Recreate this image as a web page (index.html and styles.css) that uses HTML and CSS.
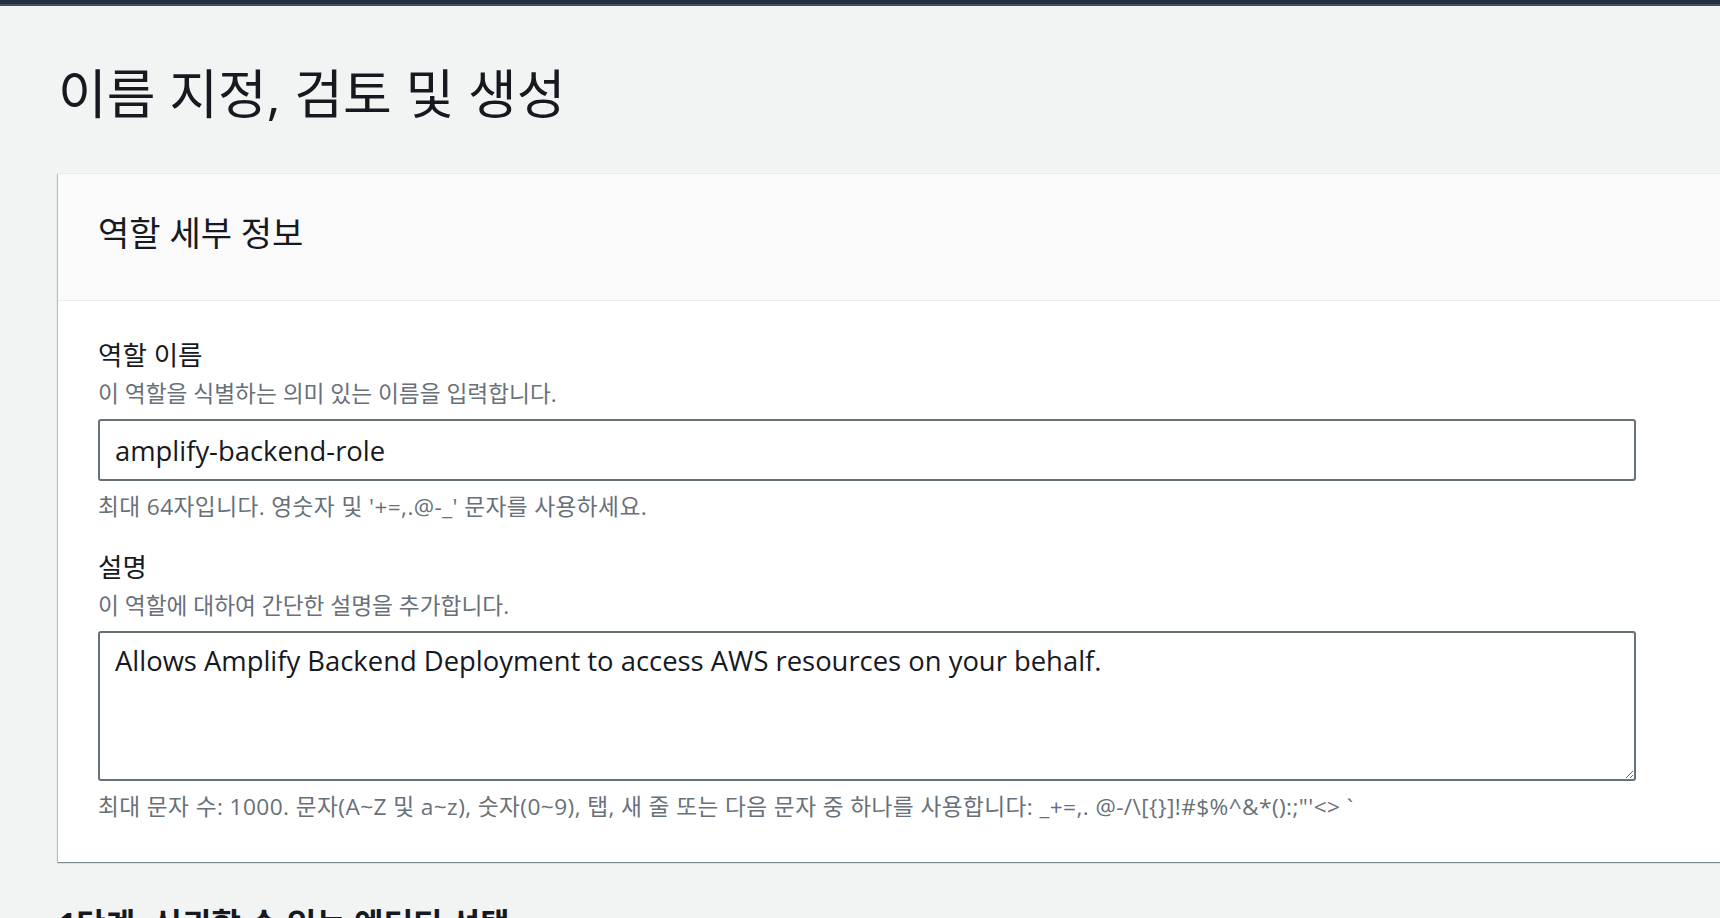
FILE: index.html
```html
<!DOCTYPE html>
<html lang="ko">
<head>
<meta charset="utf-8">
<title>이름 지정, 검토 및 생성</title>
<link rel="stylesheet" href="styles.css">
</head>
<body>
<div class="topbar"></div>
<main class="page">
  <h1 class="page-title">이름 지정, 검토 및 생성</h1>
  <section class="card">
    <header class="card-header">
      <h2 class="card-title">역할 세부 정보</h2>
    </header>
    <div class="card-body">
      <div class="field">
        <label class="field-label" for="role-name">역할 이름</label>
        <p class="field-desc">이 역할을 식별하는 의미 있는 이름을 입력합니다.</p>
        <input class="text-input" id="role-name" type="text" value="amplify-backend-role">
        <p class="field-constraint">최대 64자입니다. 영숫자 및 '+=,.@-_' 문자를 사용하세요.</p>
      </div>
      <div class="field">
        <label class="field-label" for="role-desc">설명</label>
        <p class="field-desc">이 역할에 대하여 간단한 설명을 추가합니다.</p>
        <textarea class="text-area" id="role-desc">Allows Amplify Backend Deployment to access AWS resources on your behalf.</textarea>
        <p class="field-constraint">최대 문자 수: 1000. 문자(A~Z 및 a~z), 숫자(0~9), 탭, 새 줄 또는 다음 문자 중 하나를 사용합니다: _+=,. @-/\[{}]!#$%^&amp;*():;"'&lt;&gt; `</p>
      </div>
    </div>
  </section>
  <h2 class="section-title">1단계: 신뢰할 수 있는 엔터티 선택</h2>
</main>
</body>
</html>
```
FILE: styles.css
```css
* {
  box-sizing: border-box;
}

html,
body {
  margin: 0;
  height: 100%;
}

body {
  background: #f2f3f3;
  color: #16191f;
  font-family: "Open Sans", "Noto Sans CJK KR", sans-serif;
  overflow: hidden;
}

.topbar {
  height: 6px;
  background: #232f3e;
  border-bottom: 2px solid #454f5c;
}

.page {
  padding-left: 58px;
}

.page-title {
  margin: 58px 0 0;
  font-size: 53px;
  line-height: 60px;
  font-weight: 400;
}

.card {
  margin-top: 49px;
  width: 1700px;
  background: #ffffff;
  border-top: 1px solid #eaeded;
  box-shadow: 0 1px 1px 0 rgba(0, 28, 36, 0.35),
    -1px 1px 1px 0 rgba(0, 28, 36, 0.2);
}

.card-header {
  background: #fafafa;
  padding: 39px 40px 47px;
  border-bottom: 1px solid #eaeded;
}

.card-title {
  margin: 0;
  font-size: 34px;
  line-height: 40px;
  font-weight: 400;
}

.card-body {
  padding: 38px 40px 41px;
}

.field {
  width: 1538px;
  display: flex;
  flex-direction: column;
}

.field + .field {
  margin-top: 30px;
}

.field-label {
  font-size: 26.5px;
  line-height: 32px;
  color: #16191f;
}

.field-desc,
.field-constraint {
  margin: 0;
  font-size: 22.7px;
  line-height: 28px;
  color: #687078;
}

.field-desc {
  margin-top: 9px;
}

.field-constraint {
  margin-top: 12px;
  letter-spacing: 0.4px;
}

.text-input,
.text-area {
  margin-top: 11px;
  width: 100%;
  border: 2px solid #687078;
  border-radius: 3px;
  background: #ffffff;
  color: #16191f;
  font-family: "Open Sans", "Noto Sans CJK KR", sans-serif;
  font-size: 27.4px;
  line-height: 36px;
  outline: none;
}

.text-input {
  height: 62px;
  padding: 11px 15px;
}

.text-area {
  display: block;
  height: 150px;
  padding: 10px 15px;
  resize: vertical;
  overflow: hidden;
}

.section-title {
  margin: 42px 0 0;
  font-size: 32px;
  line-height: 40px;
  font-weight: 700;
}
```
